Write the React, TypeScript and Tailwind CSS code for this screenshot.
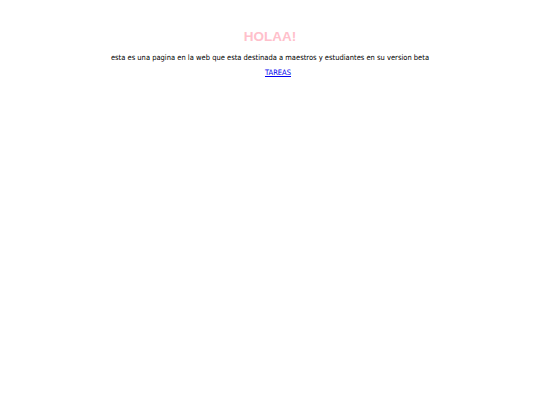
export default function App() {
  return (
    <div className="min-h-[405px] w-full bg-white pt-[28px] text-center [font-family:'DejaVu_Sans_Condensed','DejaVu_Sans',Verdana,sans-serif] [font-stretch:condensed]">
      <h1 className="text-[13.5px] font-bold leading-[18px] text-[#ffc0cb] [font-family:'Liberation_Sans',Arial,sans-serif] [font-stretch:normal]">
        HOLAA!
      </h1>
      <p className="mt-[6px] text-[7.5px] leading-[12px] text-black">
        esta es una pagina en la web que esta destinada a maestros y estudiantes en su version beta
      </p>
      <div className="mt-[3px] text-[7.5px] leading-[12px]">
        <a href="#" className="ml-[16px] text-[#0000ee] underline">
          TAREAS
        </a>
      </div>
    </div>
  );
}
